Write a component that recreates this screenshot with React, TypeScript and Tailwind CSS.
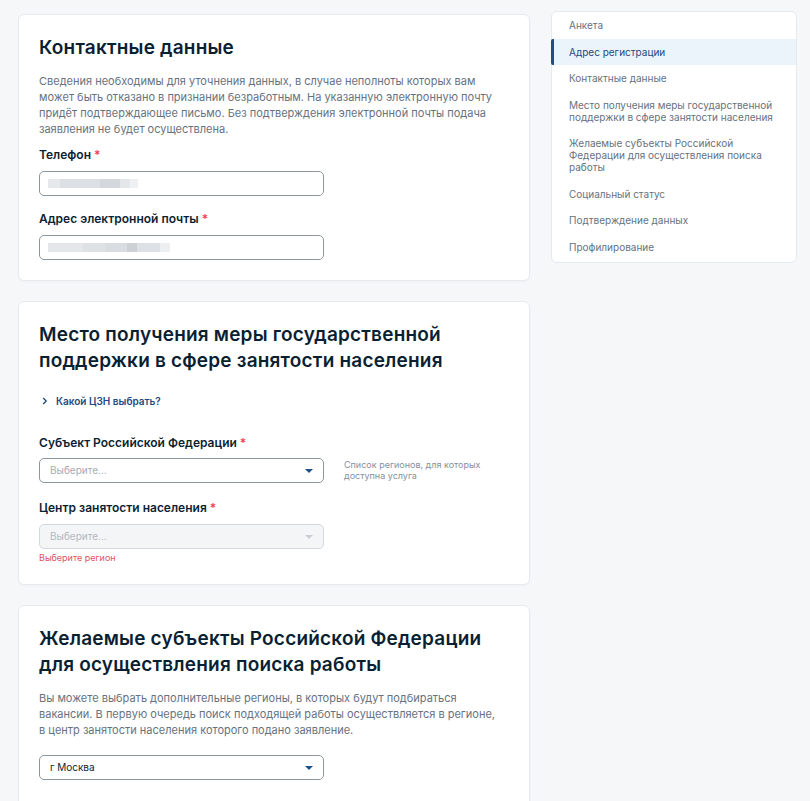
import React from "react"

const font = { fontFamily: "Inter, 'Noto Sans', sans-serif" }

function Star() {
  return <span className="ml-[3px] text-[#ee3f58]">*</span>
}

function Label({ children }: { children: React.ReactNode }) {
  return (
    <div className="text-[12px] leading-[16px] font-semibold text-[#0b1f33]">
      {children}
      <Star />
    </div>
  )
}

function Caret({ disabled }: { disabled?: boolean }) {
  return (
    <svg width="8" height="4" viewBox="0 0 8 4" className="shrink-0">
      <path d="M0 0h8L4 4z" fill={disabled ? "#c9ced4" : "#1d4f8c"} />
    </svg>
  )
}

function Select({ value, placeholder, disabled }: { value?: string; placeholder?: string; disabled?: boolean }) {
  return (
    <div
      className={`flex h-[25px] w-[285px] items-center justify-between rounded-[5px] border pl-[10px] pr-[10px] ${
        disabled ? "border-[#d3d8de] bg-[#f4f5f7]" : "border-[#8d959e] bg-white"
      }`}
    >
      <span className={`text-[10px] ${value ? "text-[#0b1f33]" : disabled ? "text-[#b3b9c0]" : "text-[#a5acb4]"}`}>
        {value ?? placeholder}
      </span>
      <Caret disabled={disabled} />
    </div>
  )
}

function BlurInput({ segments }: { segments: { w: number; c: string }[] }) {
  return (
    <div className="flex h-[25px] w-[285px] items-center rounded-[5px] border border-[#8d959e] bg-white pl-[8px]">
      <div className="flex h-[9px] blur-[0.6px]">
        {segments.map((s, i) => (
          <div key={i} className="h-full" style={{ width: s.w, background: s.c }} />
        ))}
      </div>
    </div>
  )
}

function Card({ children }: { children: React.ReactNode }) {
  return (
    <div className="rounded-[6px] border border-[#e6e9ee] bg-white p-[20px] shadow-[0_1px_2px_rgba(0,0,0,0.03)]">
      {children}
    </div>
  )
}

function Heading({ children }: { children: React.ReactNode }) {
  return <h2 className="text-[19px] leading-[26px] font-semibold tracking-[0.2px] text-[#0b1f33]">{children}</h2>
}

const nav = [
  ["Анкета"],
  ["Адрес регистрации"],
  ["Контактные данные"],
  ["Место получения меры государственной", "поддержки в сфере занятости населения"],
  ["Желаемые субъекты Российской", "Федерации для осуществления поиска", "работы"],
  ["Социальный статус"],
  ["Подтверждение данных"],
  ["Профилирование"],
]

export default function App() {
  return (
    <div className="min-h-[801px] w-full bg-[#f6f7f9]" style={font}>
      <div className="flex items-start gap-[21px] pl-[18px] pt-[14px]">
        <div className="flex w-[512px] flex-col gap-[20px]">
          <Card>
            <Heading>Контактные данные</Heading>
            <p className="mt-[12px] text-[11px] leading-[16px] text-[#66727f]">
              Сведения необходимы для уточнения данных, в случае неполноты которых вам
              <br />
              может быть отказано в признании безработным. На указанную электронную почту
              <br />
              придёт подтверждающее письмо. Без подтверждения электронной почты подача
              <br />
              заявления не будет осуществлена.
            </p>
            <div className="mt-[10px]">
              <Label>Телефон</Label>
            </div>
            <div className="mt-[8px]">
              <BlurInput
                segments={[
                  { w: 12, c: "#e6e8eb" },
                  { w: 40, c: "#dcdfe3" },
                  { w: 20, c: "#d4d7db" },
                  { w: 10, c: "#e4e6e9" },
                  { w: 8, c: "#eef0f2" },
                ]}
              />
            </div>
            <div className="mt-[15px]">
              <Label>Адрес электронной почты</Label>
            </div>
            <div className="mt-[8px]">
              <BlurInput
                segments={[
                  { w: 35, c: "#e4e6e9" },
                  { w: 22, c: "#dfe2e5" },
                  { w: 22, c: "#d9dce0" },
                  { w: 10, c: "#cdd1d6" },
                  { w: 23, c: "#dde0e4" },
                  { w: 10, c: "#eceef0" },
                ]}
              />
            </div>
          </Card>

          <Card>
            <Heading>
              Место получения меры государственной
              <br />
              поддержки в сфере занятости населения
            </Heading>
            <div className="mt-[20px] flex items-center gap-[8px] pl-[3px] text-[10px] leading-[14px] font-semibold text-[#1d4a80]">
              <svg width="6" height="8" viewBox="0 0 6 8">
                <path d="M1.2 1l3 3-3 3" fill="none" stroke="#1d4a80" strokeWidth="1.3" />
              </svg>
              <span>Какой ЦЗН выбрать?</span>
            </div>
            <div className="mt-[27px]">
              <Label>Субъект Российской Федерации</Label>
            </div>
            <div className="mt-[7px] flex items-start gap-[20px]">
              <Select placeholder="Выберите..." />
              <div className="pt-[1px] text-[9px] leading-[11px] text-[#86909c]">
                Список регионов, для которых
                <br />
                доступна услуга
              </div>
            </div>
            <div className="mt-[17px]">
              <Label>Центр занятости населения</Label>
            </div>
            <div className="mt-[8px]">
              <Select placeholder="Выберите..." disabled />
            </div>
            <div className="mt-[3px] text-[9px] leading-[12px] text-[#e0525c]">Выберите регион</div>
          </Card>

          <Card>
            <Heading>
              Желаемые субъекты Российской Федерации
              <br />
              для осуществления поиска работы
            </Heading>
            <p className="mt-[12px] text-[11px] leading-[16px] text-[#66727f]">
              Вы можете выбрать дополнительные регионы, в которых будут подбираться
              <br />
              вакансии. В первую очередь поиск подходящей работы осуществляется в регионе,
              <br />
              в центр занятости населения которого подано заявление.
            </p>
            <div className="mt-[17px]">
              <Select value="г Москва" />
            </div>
            <div className="h-[40px]" />
          </Card>
        </div>

        <div className="-mt-[3px] w-[246px] rounded-[6px] border border-[#e6e9ee] bg-white pb-[2px]">
          {nav.map((lines, i) => (
            <div
              key={i}
              className={`relative py-[7.25px] pl-[17px] pr-[8px] text-[10px] leading-[12px] ${
                i === 1 ? "bg-[#ebf3fb] text-[#1d4a80]" : "text-[#66727f]"
              }`}
            >
              {i === 1 && <div className="absolute -left-[1px] top-0 bottom-0 w-[3px] rounded-l-[2px] bg-[#1d4f8c]" />}
              {lines.map((l, j) => (
                <div key={j}>{l}</div>
              ))}
            </div>
          ))}
        </div>
      </div>
    </div>
  )
}
